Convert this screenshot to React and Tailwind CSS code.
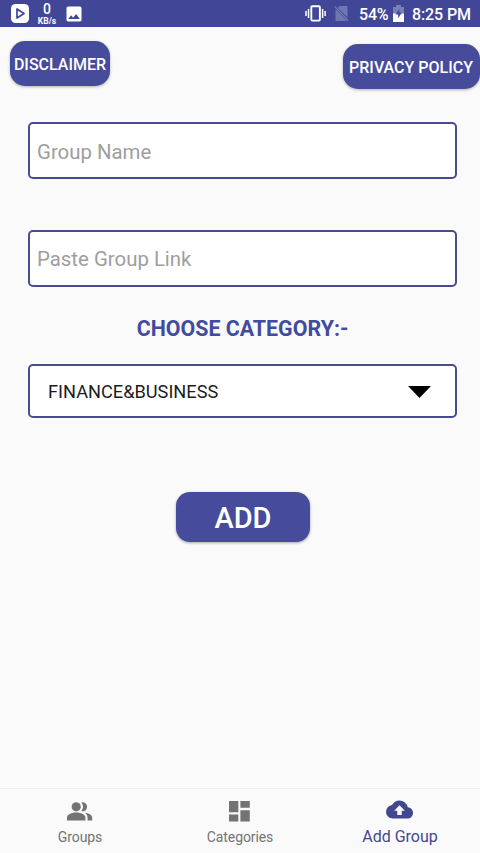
import React, { useState } from 'react';
import { MdImage } from 'react-icons/md';

function StatusBar() {
  return (
    <div className="h-[27px] bg-[#414796] text-white flex items-center justify-between pl-[11px] pr-[10px]">
      <div className="flex items-center">
        <svg className="w-[18px] h-[19px]" viewBox="0 0 18 19">
          <rect width="18" height="19" rx="4.5" fill="#fff" />
          <path d="M6 5v9l7-4.5z" fill="none" stroke="#414796" strokeWidth="1.7" strokeLinejoin="round" />
        </svg>
        <div className="ml-[8px] w-[20px] h-[23px] flex flex-col items-center justify-between font-medium">
          <span className="text-[14px] leading-[14px]">0</span>
          <span className="text-[8.5px] leading-[8px] font-bold">KB/s</span>
        </div>
        <MdImage className="ml-[7px] w-[20px] h-[20px]" />
      </div>
      <div className="flex items-center font-medium text-[16px] leading-none">
        <svg className="w-[21px] h-[17px]" viewBox="0 0 21 17" fill="none" stroke="#fff" strokeWidth="1.5">
          <rect x="6.3" y="1.2" width="8.6" height="14.4" rx="1" strokeWidth="1.9" />
          <path d="M3.5 4v9M1 6v5M17.6 4v9M20.1 6v5" />
        </svg>
        <svg className="ml-[8px] w-[15px] h-[17px]" viewBox="0 0 15 17">
          <path d="M5.5 1H13.5v11.5L3.5 2.8zM1.5 4L12.5 15.5V16h-11z" fill="#7076b0" />
          <path d="M.8 1.5L14.2 15.8" stroke="#7076b0" strokeWidth="1.4" />
        </svg>
        <span className="ml-[10px] w-[29px] whitespace-nowrap tracking-[-0.2px] pt-[2px]">54%</span>
        <svg className="ml-[5px] w-[11px] h-[17px]" viewBox="0 0 11 17">
          <path d="M0 2h3V0h5v2h3v8H0z" fill="#7a80b6" />
          <path d="M0 8.5h11V17H0z" fill="#fff" />
          <path d="M6.3 4L2.5 9.5h2.7v3.7l3.6-5.4H6.3z" fill="#414796" />
        </svg>
        <span className="ml-[8px] w-[58px] whitespace-nowrap tracking-[-0.1px] pt-[2px]">8:25 PM</span>
      </div>
    </div>
  );
}

function PeopleIcon() {
  return (
    <svg className="w-[27px] h-[27px] mr-px" viewBox="0 0 27 27" fill="currentColor">
      <circle cx="10.2" cy="8.8" r="4.6" />
      <path d="M1 22.5v-3c0-3.4 5.2-5 9.2-5s9.2 1.6 9.2 5v3z" />
      <path d="M15.3 4.5a4.5 4.5 0 1 1 0 8.6c1.1-1.2 1.7-2.6 1.7-4.3s-.6-3.1-1.7-4.3z" />
      <path d="M18.8 14.8c3.7.5 7.4 2.1 7.4 4.9v2.8h-4.6v-2.8c0-2.1-1.1-3.7-2.8-4.9z" />
    </svg>
  );
}

function DashboardIcon() {
  return (
    <svg className="w-[27px] h-[27px] mr-px" viewBox="0 0 27 27" fill="currentColor">
      <path d="M3 3h9.3v11.3H3zM3 16.5h9.3v7H3zM14.4 3h9.4v6.8h-9.4zM14.4 12.2h9.4v11.3h-9.4z" />
    </svg>
  );
}

function CloudUploadIcon() {
  return (
    <svg className="w-[27px] h-[27px] mr-px" viewBox="0 0 24 24" fill="currentColor">
      <path d="M19.35 10.04A7.49 7.49 0 0 0 12 4C9.11 4 6.6 5.64 5.35 8.04A5.994 5.994 0 0 0 0 14c0 3.31 2.69 6 6 6h13c2.76 0 5-2.24 5-5 0-2.64-2.05-4.78-4.65-4.96zM14 13v3.8h-4V13H7.2L12 8.2l4.8 4.8H14z" />
    </svg>
  );
}

function NavItem({ icon, label, active, onClick }) {
  return (
    <button
      onClick={onClick}
      className={`flex-1 flex flex-col items-center ${active ? 'text-[#42488f] pt-[7px]' : 'text-[#737373] pt-[9px]'}`}
    >
      {icon}
      <span
        className={
          active ? 'text-[16px] leading-[20px] mt-[4px]' : 'text-[14px] leading-[18px] mt-[3px] tracking-[-0.1px]'
        }
      >
        {label}
      </span>
    </button>
  );
}

export default function App() {
  const [tab, setTab] = useState('add');
  const [name, setName] = useState('');
  const [link, setLink] = useState('');

  const inputStyles =
    'block w-full h-[57px] bg-white border-2 border-[#484b8d] rounded-[5px] pl-[7px] text-[20.4px] text-[#212121] placeholder:text-[#9e9e9e] outline-none';

  return (
    <div className="w-[480px] h-[853px] bg-[#fafafa] flex flex-col overflow-hidden font-['Roboto',sans-serif]">
      <StatusBar />

      <div className="flex justify-between pl-[10px] pt-[14px]">
        <button className="w-[100px] h-[45px] pt-[2px] rounded-[15px] bg-[#474b9b] text-white text-[16px] font-medium whitespace-nowrap flex items-center justify-center shadow-[0_1px_3px_rgba(0,0,0,0.3)]">
          DISCLAIMER
        </button>
        <button className="mt-[3px] w-[137px] h-[45px] pt-[2px] pr-px rounded-[15px] bg-[#474b9b] text-white text-[16px] font-medium whitespace-nowrap flex items-center justify-center shadow-[0_1px_3px_rgba(0,0,0,0.3)]">
          PRIVACY POLICY
        </button>
      </div>

      <div className="flex-1 pl-[28px] pr-[23px] pt-[33px]">
        <input
          className={`${inputStyles} pt-[2px]`}
          placeholder="Group Name"
          value={name}
          onChange={(e) => setName(e.target.value)}
        />
        <input
          className={`${inputStyles} pt-px mt-[51px]`}
          placeholder="Paste Group Link"
          value={link}
          onChange={(e) => setLink(e.target.value)}
        />

        <h2 className="mt-[29px] text-center text-[21.4px] leading-[26px] font-bold text-[#414c9f]">CHOOSE CATEGORY:-</h2>

        <div className="mt-[22px] h-[54px] bg-white border-2 border-[#484b8d] rounded-[5px] pl-[18px] pr-[24px] flex items-center justify-between">
          <span className="text-[18.2px] pt-px text-[#1c1c1c]">FINANCE&amp;BUSINESS</span>
          <svg className="w-[23px] h-[12px] mt-[2px]" viewBox="0 0 23 12">
            <path d="M0 0h23L11.5 12z" fill="#000" />
          </svg>
        </div>

        <button className="mt-[74px] ml-[148px] w-[134px] h-[50px] pt-[3px] rounded-[14px] bg-[#474b9b] text-white text-[29px] font-medium flex items-center justify-center shadow-[0_1px_3px_rgba(0,0,0,0.35)]">
          ADD
        </button>
      </div>

      <nav className="h-[65px] border-t border-[#efefef] flex items-start">
        <NavItem icon={<PeopleIcon />} label="Groups" active={tab === 'groups'} onClick={() => setTab('groups')} />
        <NavItem
          icon={<DashboardIcon />}
          label="Categories"
          active={tab === 'categories'}
          onClick={() => setTab('categories')}
        />
        <NavItem icon={<CloudUploadIcon />} label="Add Group" active={tab === 'add'} onClick={() => setTab('add')} />
      </nav>
    </div>
  );
}
